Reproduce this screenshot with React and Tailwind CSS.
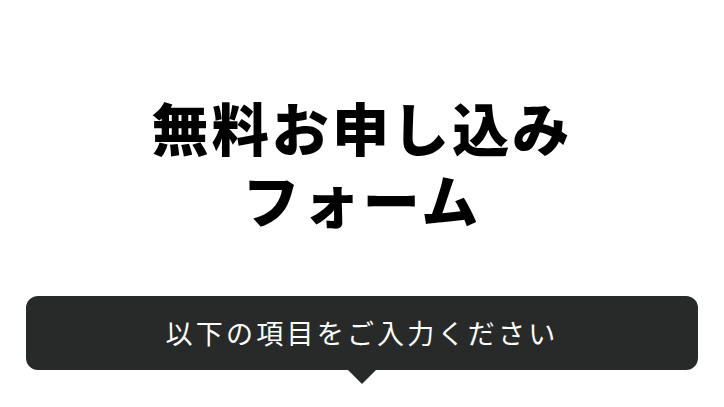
export default function App() {
  return (
    <div
      className="w-[724px] h-[407px] bg-white overflow-hidden"
      style={{ fontFamily: '"Noto Sans CJK JP", "Noto Sans", sans-serif' }}
    >
      <h1 className="pt-[90px] flex flex-col items-center text-[57px] leading-[72px] font-black tracking-[0.055em] text-black">
        <span className="block">無料お申し込み</span>
        <span className="block">フォーム</span>
      </h1>
      <div className="mt-[62px] px-[26px]">
        <div className="relative h-[74px] rounded-[12px] bg-[#282a2a] flex items-center justify-center">
          <p className="text-white text-[27px] tracking-[0.12em]">以下の項目をご入力ください</p>
          <span className="absolute left-1/2 top-full -translate-x-1/2 w-0 h-0 border-l-[14px] border-r-[14px] border-t-[14px] border-l-transparent border-r-transparent border-t-[#282a2a]" />
        </div>
      </div>
    </div>
  );
}
